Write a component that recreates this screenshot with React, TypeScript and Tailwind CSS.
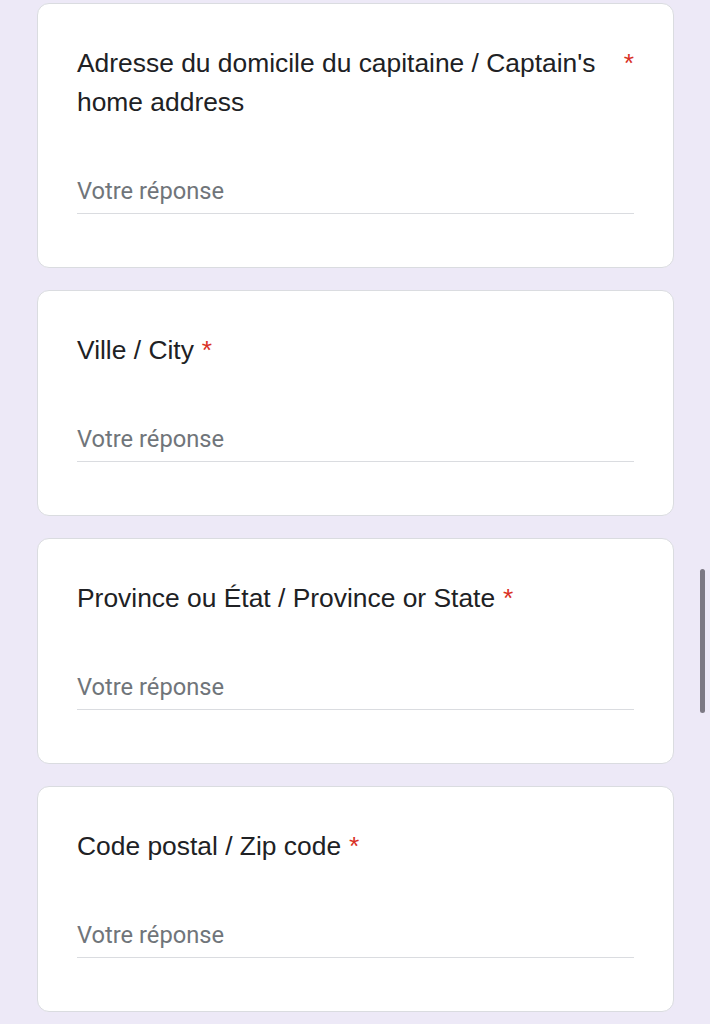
import React from "react";

const questions = [
  "Adresse du domicile du capitaine / Captain's home address",
  "Ville / City",
  "Province ou État / Province or State",
  "Code postal / Zip code",
];

const QuestionCard = ({ title }: { title: string }) => {
  return (
    <div className="bg-white border border-[#dadce0] rounded-[12px] px-[39px] pt-[40px] pb-[53px]">
      <div className="flex items-start text-[26.4px] leading-[39px] text-[#202124] font-['Liberation_Sans',Arial,sans-serif]">
        <span>{title}</span>
        <span className="shrink-0 ml-[8px] text-[#d93025]">*</span>
      </div>
      <div className="mt-[54px] border-b border-[#dadce0] pb-[7px]">
        <div className="text-[23.7px] leading-[30px] text-[#70757a] font-['Roboto',sans-serif]">
          Votre réponse
        </div>
      </div>
    </div>
  );
};

export default function App() {
  return (
    <div className="relative min-h-[1024px] bg-[#ede9f7] pt-[3px] pl-[37px]">
      <div className="flex flex-col gap-[22px] w-[637px]">
        {questions.map((q) => (
          <QuestionCard key={q} title={q} />
        ))}
      </div>
      {/* scroll indicator */}
      <div className="absolute left-[700px] top-[569px] w-[5px] h-[144px] rounded-full bg-[#7c7984]" />
    </div>
  );
}
